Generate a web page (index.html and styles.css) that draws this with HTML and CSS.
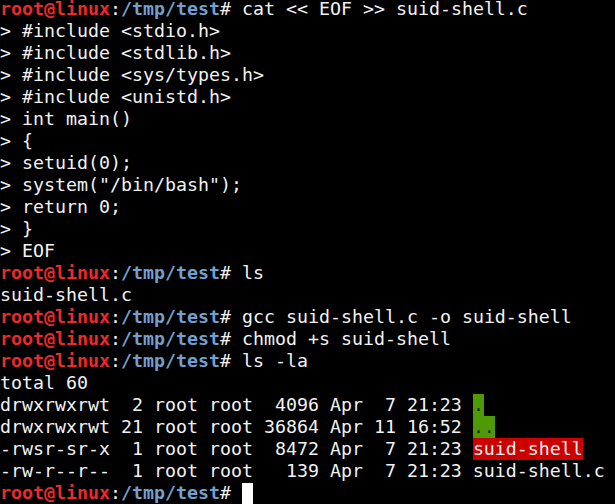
FILE: index.html
```html
<!DOCTYPE html>
<html>
<head>
<meta charset="utf-8">
<link rel="stylesheet" href="styles.css">
</head>
<body>
<pre class="term"><span class="u">root@linux</span>:<span class="p">/tmp/test</span># cat &lt;&lt; EOF &gt;&gt; suid-shell.c
&gt; #include &lt;stdio.h&gt;
&gt; #include &lt;stdlib.h&gt;
&gt; #include &lt;sys/types.h&gt;
&gt; #include &lt;unistd.h&gt;
&gt; int main()
&gt; {
&gt; setuid(0);
&gt; system("/bin/bash");
&gt; return 0;
&gt; }
&gt; EOF
<span class="u">root@linux</span>:<span class="p">/tmp/test</span># ls
suid-shell.c
<span class="u">root@linux</span>:<span class="p">/tmp/test</span># gcc suid-shell.c -o suid-shell
<span class="u">root@linux</span>:<span class="p">/tmp/test</span># chmod +s suid-shell
<span class="u">root@linux</span>:<span class="p">/tmp/test</span># ls -la
total 60
drwxrwxrwt  2 root root  4096 Apr  7 21:23 <span class="tw">.</span>
drwxrwxrwt 21 root root 36864 Apr 11 16:52 <span class="tw">..</span>
-rwsr-sr-x  1 root root  8472 Apr  7 21:23 <span class="su">suid-shell</span>
-rw-r--r--  1 root root   139 Apr  7 21:23 suid-shell.c
<span class="u">root@linux</span>:<span class="p">/tmp/test</span># <span class="cursor"> </span></pre>
</body>
</html>
```
FILE: styles.css
```css
html, body {
  margin: 0;
  padding: 0;
  background: #000000;
  overflow: hidden;
}
.term {
  margin: -2px 0 0 0;
  padding: 0;
  font-family: "DejaVu Sans Mono", monospace;
  font-size: 18.27px;
  line-height: 22px;
  color: #f2f2f2;
  white-space: pre;
}
.u {
  color: #ef2929;
  font-weight: bold;
}
.p {
  color: #729fcf;
  font-weight: bold;
}
.tw {
  background: #4e9a06;
  color: #1a1a1a;
  display: inline-block;
  height: 22px;
  vertical-align: top;
}
.su {
  background: #cc0000;
  color: #f2f2f2;
  display: inline-block;
  height: 22px;
  vertical-align: top;
}
.cursor {
  background: #ffffff;
  display: inline-block;
  height: 21px;
  vertical-align: top;
  margin-top: 1px;
}
```
